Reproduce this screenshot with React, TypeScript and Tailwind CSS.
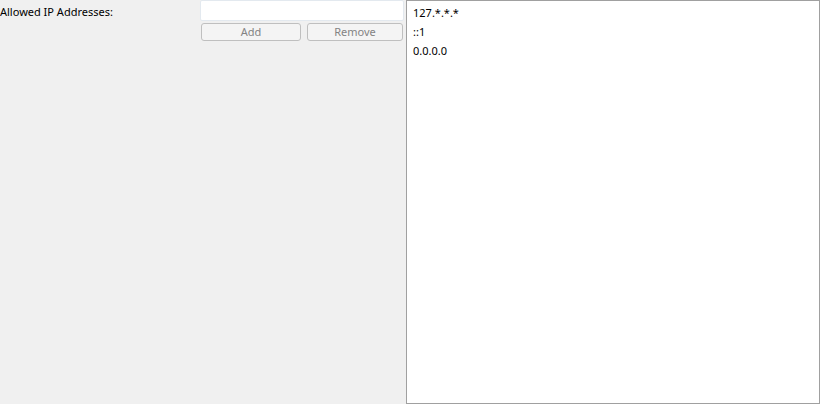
export default function App() {
  const font = { fontFamily: '"Noto Sans", sans-serif' };
  return (
    <div className="w-[820px] h-[404px] bg-[#f0f0f0] flex text-[11px] text-black" style={font}>
      <div className="w-[200px] pt-[4px] leading-[16px]">Allowed IP Addresses:</div>
      <div className="w-[204px] flex flex-col">
        <div className="h-[21px] w-[204px] bg-white border border-[#e3e9ef] rounded-[2px]"></div>
        <div className="flex gap-[6px] pl-[1px] mt-[2px]">
          <div className="w-[100px] h-[18px] border border-[#bfbfbf] rounded-[3px] bg-[#f4f4f4] text-[#838383] flex items-center justify-center leading-none pb-[2px]">Add</div>
          <div className="w-[96px] h-[18px] border border-[#bfbfbf] rounded-[3px] bg-[#f4f4f4] text-[#838383] flex items-center justify-center leading-none pb-[2px]">Remove</div>
        </div>
      </div>
      <div className="ml-[2px] w-[414px] h-[404px] bg-white border border-[#a0a0a0] pl-[6px] pt-[2px] leading-[19px]">
        <div>127.*.*.*</div>
        <div>::1</div>
        <div>0.0.0.0</div>
      </div>
    </div>
  );
}
